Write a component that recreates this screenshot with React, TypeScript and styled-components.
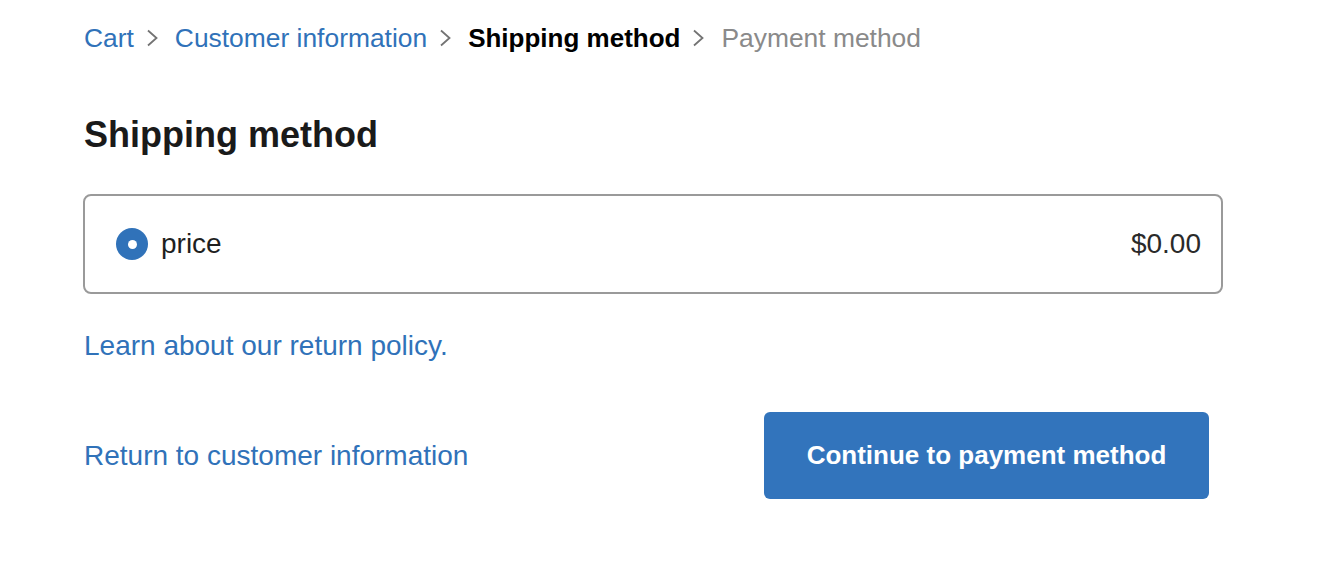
import React, { useState } from "react";
import styled, { createGlobalStyle } from "styled-components";

const GlobalStyle = createGlobalStyle`
  html, body {
    margin: 0;
    padding: 0;
    background: #fff;
  }
  body {
    font-family: "Liberation Sans", Arial, Helvetica, sans-serif;
    -webkit-font-smoothing: antialiased;
  }
`;

const Chevron = () => (
  <ChevronIcon viewBox="0 0 13 18" width="13" height="18">
    <path d="M2 1.5 L10.5 9 L2 16.5" fill="none" stroke="#737373" strokeWidth="1.8" />
  </ChevronIcon>
);

const App = () => {
  const [selected, setSelected] = useState(true);

  return (
    <Page>
      <GlobalStyle />
      <Breadcrumbs>
        <Crumb href="#">Cart</Crumb>
        <Chevron />
        <Crumb href="#">Customer information</Crumb>
        <Chevron />
        <Crumb $current>Shipping method</Crumb>
        <Chevron />
        <Crumb $muted>Payment method</Crumb>
      </Breadcrumbs>

      <Title>Shipping method</Title>

      <OptionBox onClick={() => setSelected(true)}>
        <Radio $checked={selected} />
        <OptionLabel>price</OptionLabel>
        <Price>$0.00</Price>
      </OptionBox>

      <PolicyLink href="#">Learn about our return policy.</PolicyLink>

      <Footer>
        <BackLink href="#">Return to customer information</BackLink>
        <ContinueButton>Continue to payment method</ContinueButton>
      </Footer>
    </Page>
  );
};

export default App;

const Page = styled.div`
  display: flex;
  flex-direction: column;
  align-items: flex-start;
  padding: 23px 0 0 83px;
  width: 1140px;
`;

const Breadcrumbs = styled.nav`
  display: flex;
  align-items: center;
  height: 30px;
`;

const Crumb = styled.a<{ $current?: boolean; $muted?: boolean }>`
  font-size: ${(p) => (p.$current ? "26px" : "26.4px")};
  line-height: 30px;
  text-decoration: none;
  color: ${(p) => (p.$current ? "#000" : p.$muted ? "#8a8a8a" : "#3072b9")};
  font-weight: ${(p) => (p.$current ? "bold" : "normal")};
  padding-left: 1px;
`;

const ChevronIcon = styled.svg`
  margin: 0 15px 0 12px;
  flex-shrink: 0;
`;

const Title = styled.h2`
  margin: 61px 0 0;
  font-size: 36px;
  line-height: 42px;
  font-weight: bold;
  color: #1a1a1a;
  padding-left: 1px;
`;

const OptionBox = styled.label`
  margin-top: 38px;
  box-sizing: border-box;
  width: 100%;
  height: 100px;
  border: 2px solid #9a9a9a;
  border-radius: 8px;
  display: flex;
  align-items: center;
  padding: 0 20px 0 31px;
  cursor: pointer;
`;

const Radio = styled.span<{ $checked: boolean }>`
  width: 32px;
  height: 32px;
  border-radius: 50%;
  box-sizing: border-box;
  background: ${(p) => (p.$checked ? "#3072b9" : "#fff")};
  border: ${(p) => (p.$checked ? "none" : "2px solid #9a9a9a")};
  display: flex;
  align-items: center;
  justify-content: center;
  flex-shrink: 0;

  &::after {
    content: "";
    width: 9px;
    height: 9px;
    border-radius: 50%;
    background: #fff;
  }
`;

const OptionLabel = styled.span`
  margin-left: 13px;
  font-size: 28px;
  color: #1f1f1f;
  flex: 1;
`;

const Price = styled.span`
  font-size: 28px;
  color: #2a2a2a;
`;

const PolicyLink = styled.a`
  margin-top: 36px;
  font-size: 28px;
  line-height: 32px;
  color: #3072b9;
  text-decoration: none;
  padding-left: 1px;
`;

const Footer = styled.div`
  margin-top: 50px;
  display: flex;
  align-items: center;
  justify-content: space-between;
  box-sizing: border-box;
  width: 100%;
  padding-right: 14px;
`;

const BackLink = styled.a`
  font-size: 28px;
  line-height: 32px;
  color: #3072b9;
  text-decoration: none;
  padding-left: 1px;
`;

const ContinueButton = styled.button`
  width: 445px;
  height: 87px;
  border: none;
  border-radius: 6px;
  background: #3274bc;
  color: #fff;
  font-family: "Liberation Sans", Arial, Helvetica, sans-serif;
  font-size: 26px;
  font-weight: bold;
  cursor: pointer;
`;
